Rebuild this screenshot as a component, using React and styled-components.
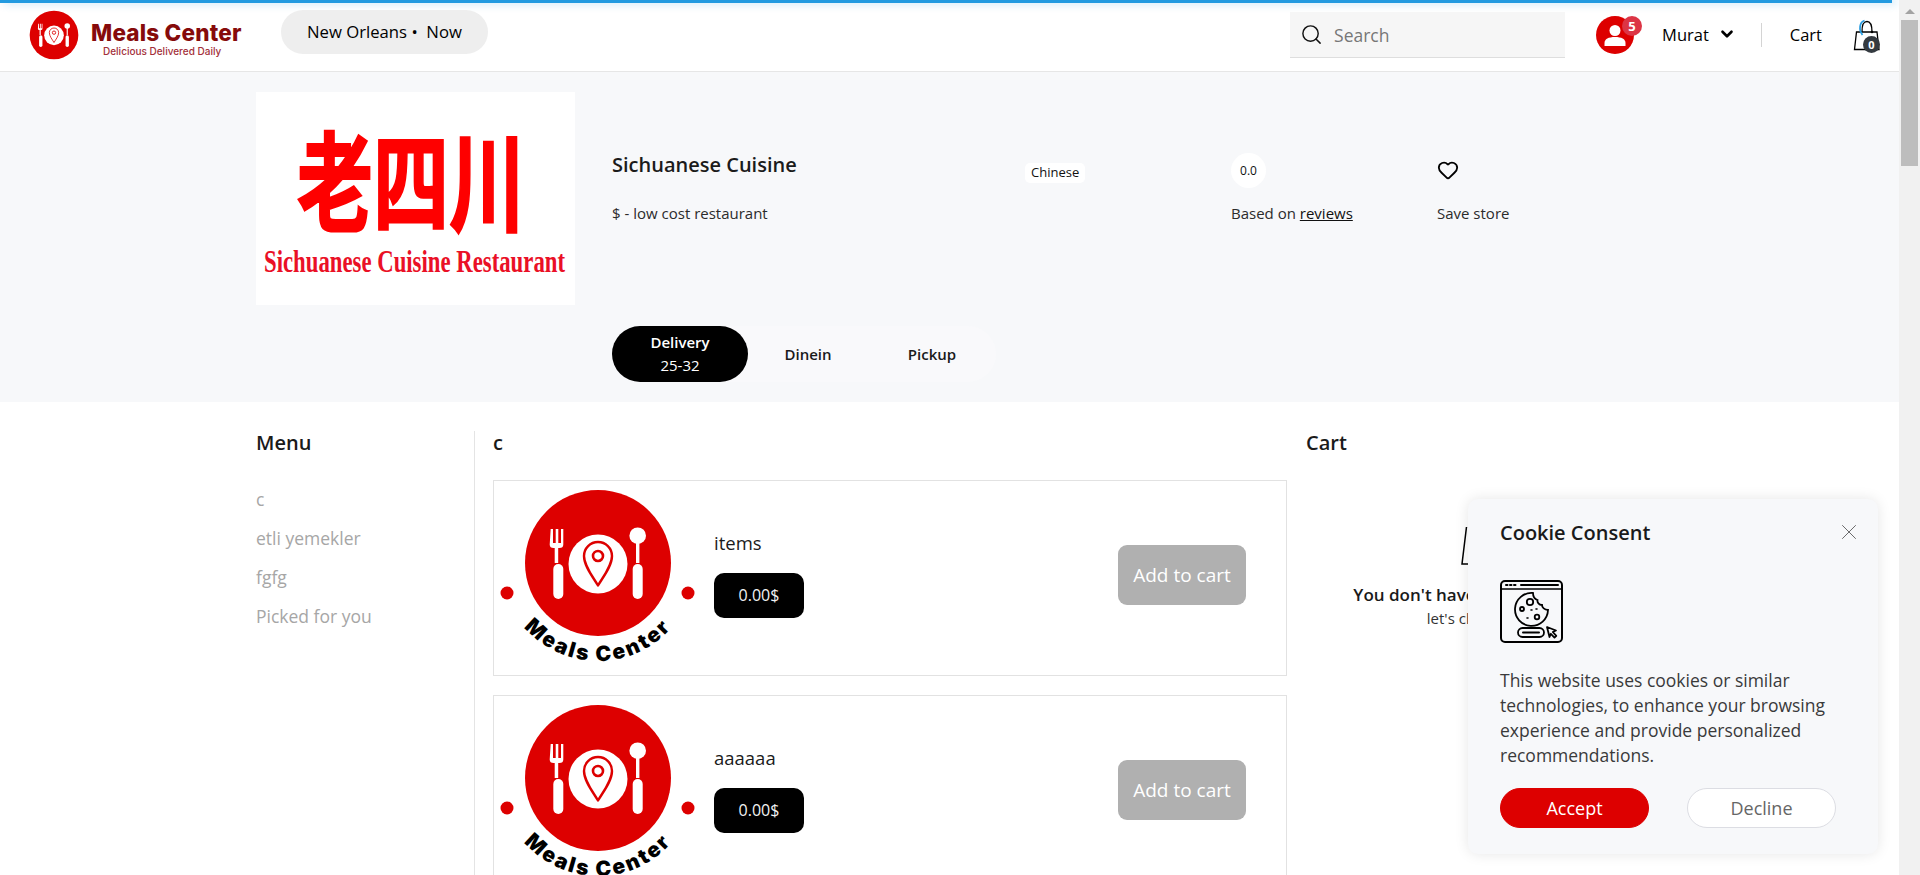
import React from 'react'
import styled, { createGlobalStyle } from 'styled-components'
import { ChevronDown, Heart, Search, X } from 'lucide-react'

const GlobalStyle = createGlobalStyle`
  * { box-sizing: border-box; }
  html, body { margin: 0; padding: 0; height: 100%; overflow: hidden; background: #fff; }
  body { font-family: "Open Sans", "Liberation Sans", sans-serif; color: #1a1a1a; }
`

const menuItems = ['c', 'etli yemekler', 'fgfg', 'Picked for you']
const products = [
  { id: 1, name: 'items', price: '0.00$' },
  { id: 2, name: 'aaaaaa', price: '0.00$' },
]

const DishMark = () => (
  <g>
    <circle r="73" fill="#dd0000" />
    <path
      d="M-47.3 -34h2.3v14h2.7v-14h2.6v14h2.700v-14h2.300v15.500q0 3.500 -4 3.500h-1.100v15h-3.500v-15h-1q-4 0 -4 -3.500z"
      fill="#fff"
    />
    <rect x="-44.700" y="1" width="10" height="35" rx="5" fill="#fff" />
    <circle cy="1" r="29.500" fill="#fff" />
    <path
      d="M0 22.500C-5 14 -14 3 -14 -7A14 14 0 0 1 14 -7C14 3 5 14 0 22.500Z"
      fill="none"
      stroke="#dd0000"
      strokeWidth="2.400"
      strokeLinejoin="round"
    />
    <circle cy="-7" r="5" fill="none" stroke="#dd0000" strokeWidth="2.600" />
    <circle cx="39.700" cy="-27.300" r="8.300" fill="#fff" />
    <rect x="38" y="-22" width="3.400" height="22" fill="#fff" />
    <rect x="34.700" y="1" width="10" height="35" rx="5" fill="#fff" />
  </g>
)

const ProductLogo = ({ id }) => (
  <ProductImage viewBox="-100 -75 200 175">
    <DishMark />
    <circle cx="-91" cy="30" r="6.500" fill="#dd0000" />
    <circle cx="90" cy="30" r="6.500" fill="#dd0000" />
    <path id={`arc-${id}`} d="M-98 0A98 98 0 0 0 98 0" fill="none" />
    <ArcLabel textAnchor="middle">
      <textPath href={`#arc-${id}`} startOffset="50%">
        Meals Center
      </textPath>
    </ArcLabel>
  </ProductImage>
)

const StoreLogo = () => (
  <StoreImage viewBox="0 0 319 213">
    <CjkName x="41" y="95" textLength="228" lengthAdjust="spacingAndGlyphs" transform="scale(1 1.38)">
      老四川
    </CjkName>
    <StoreCaption x="8" y="180" textLength="301" lengthAdjust="spacingAndGlyphs">
      Sichuanese Cuisine Restaurant
    </StoreCaption>
  </StoreImage>
)

const CookieIcon = () => (
  <CookieGlyph width="63" height="63" viewBox="0 0 63 63" fill="none" stroke="#000" strokeWidth="1.800">
    <rect x="1" y="1" width="61" height="61" rx="4" strokeWidth="2" />
    <path d="M1 9h61" strokeWidth="1.500" />
    <path d="M6 5h1.500M10 5h1.500M14 5h1.500M21 5h37" strokeWidth="2" strokeLinecap="round" />
    <path d="M33 13A16.500 16.500 0 1 0 48 30C44.500 30 42 27.500 42 25C39 25 37 22.500 37.500 20C34.500 19 33 16 33 13Z" />
    <circle cx="30" cy="22" r="3.200" />
    <circle cx="22" cy="29" r="2" />
    <circle cx="37" cy="37" r="2.300" />
    <path d="M31 30h1M27 38h1M36 29h1" strokeWidth="1.600" strokeLinecap="round" />
    <rect x="18" y="48" width="26" height="9" rx="4.500" />
    <path d="M23 52.500h16" strokeWidth="2" strokeLinecap="round" />
    <path d="M47 47l9 3.500-3.200 1.500 3.500 3.800-1.800 1.800-3.700-3.800-1.300 3.200z" strokeLinejoin="round" />
  </CookieGlyph>
)

const BagIcon = () => (
  <svg width="30" height="36" viewBox="0 0 30 36" fill="none">
    <path d="M4.500 15H25L27 32.500H2.500Z" stroke="#000" strokeWidth="1.300" />
    <path d="M10 15C10 8 11 4.500 15 4.500S20 8 20 15" stroke="#000" strokeWidth="1.300" />
    <circle cx="20" cy="15" r="1.300" fill="#000" />
    <path d="M12.500 3.500C7.500 5 6.500 13 10.500 18" stroke="#2a9de0" strokeWidth="1.800" />
  </svg>
)

const App = () => (
  <>
    <GlobalStyle />
    <Viewport>
      <Page>
        <TopBar />
        <Header>
          <Brand>
            <svg width="50" height="50" viewBox="-75 -75 150 150">
              <DishMark />
            </svg>
            <BrandText>
              <BrandName>Meals Center</BrandName>
              <BrandTagline>Delicious Delivered Daily</BrandTagline>
            </BrandText>
          </Brand>
          <LocationPill>New Orleans •&nbsp; Now</LocationPill>
          <HeaderRight>
            <SearchBox>
              <Search size={23} strokeWidth={1.500} color="#111" />
              <span>Search</span>
            </SearchBox>
            <Avatar>
              <svg width="24" height="24" viewBox="0 0 24 24" fill="#fff">
                <circle cx="12" cy="7.500" r="5.500" />
                <path d="M1.500 23v-3c0-4 4-6 10.500-6s10.500 2 10.500 6v3z" />
              </svg>
              <CountBadge>5</CountBadge>
            </Avatar>
            <UserName>
              Murat
              <ChevronDown size={18} strokeWidth={3.500} color="#000" />
            </UserName>
            <Divider />
            <CartLink>Cart</CartLink>
            <BagButton>
              <BagIcon />
              <BagCount>0</BagCount>
            </BagButton>
          </HeaderRight>
        </Header>

        <Hero>
          <StoreLogo />
          <HeroBody>
            <InfoGrid>
              <StoreName>Sichuanese Cuisine</StoreName>
              <div>
                <CuisineChip>Chinese</CuisineChip>
              </div>
              <RatingChip>0.0</RatingChip>
              <SaveIcon>
                <Heart size={22} strokeWidth={2} color="#000" />
              </SaveIcon>
              <InfoText>$ - low cost restaurant</InfoText>
              <span />
              <InfoText>
                Based on <u>reviews</u>
              </InfoText>
              <InfoText>Save store</InfoText>
            </InfoGrid>
            <Tabs>
              <Tab $active $width={136}>
                <span>Delivery</span>
                <small>25-32</small>
              </Tab>
              <Tab $width={120}>Dinein</Tab>
              <Tab $width={128}>Pickup</Tab>
            </Tabs>
          </HeroBody>
        </Hero>

        <Content>
          <MenuColumn>
            <SectionTitle>Menu</SectionTitle>
            {menuItems.map((item) => (
              <MenuItem key={item}>{item}</MenuItem>
            ))}
          </MenuColumn>
          <ProductColumn>
            <SectionTitle>c</SectionTitle>
            {products.map((product) => (
              <ProductCard key={product.id}>
                <ProductLogo id={product.id} />
                <ProductInfo>
                  <ProductName>{product.name}</ProductName>
                  <PriceTag>{product.price}</PriceTag>
                </ProductInfo>
                <AddButton>Add to cart</AddButton>
              </ProductCard>
            ))}
          </ProductColumn>
          <CartColumn>
            <SectionTitle>Cart</SectionTitle>
            <EmptyCart>
              <svg width="48" height="38" viewBox="0 0 48 38" fill="none" stroke="#000" strokeWidth="1.500">
                <path d="M5.500 0L1 37H47" />
              </svg>
              <EmptyTitle>You don't have any items in cart</EmptyTitle>
              <EmptyHint>let's check menu</EmptyHint>
            </EmptyCart>
          </CartColumn>
        </Content>

        <CookieModal>
          <CookieHead>
            <CookieTitle>Cookie Consent</CookieTitle>
            <X size={26} strokeWidth={0.800} color="#555" />
          </CookieHead>
          <CookieIcon />
          <CookieCopy>
            This website uses cookies or similar technologies, to enhance your browsing experience and
            provide personalized recommendations.
          </CookieCopy>
          <CookieActions>
            <ConsentButton $primary>Accept</ConsentButton>
            <ConsentButton>Decline</ConsentButton>
          </CookieActions>
        </CookieModal>
      </Page>
      <ScrollTrack>
        <ScrollArrow />
        <ScrollThumb />
      </ScrollTrack>
    </Viewport>
  </>
)

export default App

const Viewport = styled.div`
  display: flex;
  width: 100%;
  height: 100vh;
  overflow: hidden;
`
const Page = styled.div`
  position: relative;
  flex: 1;
  min-width: 0;
  overflow: hidden;
`
const ScrollTrack = styled.div`
  width: 21px;
  flex: none;
  background: #f1f1f1;
  padding: 9px 2px 0;
`
const ScrollArrow = styled.div`
  width: 0;
  height: 0;
  margin: 0 auto 6px;
  border-left: 5px solid transparent;
  border-right: 5px solid transparent;
  border-bottom: 5px solid #a3a3a3;
`
const ScrollThumb = styled.div`
  height: 146px;
  background: #bdbdbd;
`
const TopBar = styled.div`
  width: 1892px;
  height: 3px;
  background: #229ae0;
  box-shadow: 4px 0 8px rgba(34, 154, 224, 0.45);
`
const Header = styled.header`
  display: flex;
  align-items: center;
  height: 69px;
  padding: 0 17px 4px 29px;
  border-bottom: 1px solid #e6e6e6;
`
const Brand = styled.div`
  display: flex;
  align-items: center;
  gap: 12px;
  width: 252px;
`
const BrandText = styled.div`
  margin-top: 7px;
  font-family: Inter, "Liberation Sans", sans-serif;
`
const BrandName = styled.div`
  font-size: 22.500px;
  line-height: 25px;
  font-weight: 800;
  letter-spacing: 0.200px;
  color: #860b0b;
  white-space: nowrap;
`
const BrandTagline = styled.div`
  margin-left: 12px;
  font-size: 10px;
  line-height: 12px;
  font-weight: 500;
  color: #a3303a;
  white-space: nowrap;
`
const LocationPill = styled.div`
  display: flex;
  align-items: center;
  height: 44px;
  margin-bottom: 6px;
  padding: 0 26px 2px;
  border-radius: 22px;
  background: #eeeeee;
  font-size: 16.700px;
  font-weight: 500;
  color: #000;
`
const HeaderRight = styled.div`
  display: flex;
  align-items: center;
  margin-left: auto;
`
const SearchBox = styled.div`
  display: flex;
  align-items: center;
  gap: 11px;
  width: 275px;
  height: 46px;
  padding-left: 10px;
  background: #f6f6f6;
  border-bottom: 1px solid #dedede;
  font-size: 17.500px;
  color: #777;
`
const Avatar = styled.div`
  position: relative;
  display: flex;
  align-items: center;
  justify-content: center;
  width: 38px;
  height: 38px;
  margin-left: 31px;
  border-radius: 50%;
  background: #dd0000;
`
const CountBadge = styled.span`
  position: absolute;
  top: 0;
  left: 26px;
  width: 20px;
  height: 20px;
  border-radius: 50%;
  background: #dc3545;
  color: #fff;
  font-size: 13px;
  font-weight: 700;
  line-height: 20px;
  text-align: center;
`
const UserName = styled.div`
  display: flex;
  align-items: center;
  gap: 9px;
  margin: 0 0 2px 28px;
  font-size: 16.500px;
  font-weight: 500;
  color: #000;
`
const Divider = styled.div`
  width: 1px;
  height: 24px;
  margin-left: 25px;
  background: #d4d4d4;
`
const CartLink = styled.div`
  margin: 0 0 2px 28px;
  font-size: 16.500px;
  font-weight: 500;
  color: #000;
`
const BagButton = styled.div`
  position: relative;
  width: 30px;
  height: 36px;
  margin-left: 30px;
`
const BagCount = styled.span`
  position: absolute;
  top: 19px;
  right: 2px;
  width: 17px;
  height: 17px;
  border-radius: 50%;
  background: #343a40;
  color: #fff;
  font-size: 11px;
  font-weight: 700;
  line-height: 17px;
  text-align: center;
`
const Hero = styled.section`
  display: flex;
  gap: 37px;
  height: 330px;
  padding: 20px 0 0 256px;
  background: #f7f8fa;
`
const StoreImage = styled.svg`
  width: 319px;
  height: 213px;
  flex: none;
  background: #fff;
`
const CjkName = styled.text`
  font-family: "Noto Sans CJK SC", sans-serif;
  font-size: 78px;
  font-weight: 700;
  fill: #fe0000;
  stroke: #fe0000;
  stroke-width: 1.500px;
`
const StoreCaption = styled.text`
  font-family: "Liberation Serif", serif;
  font-size: 31px;
  font-weight: 700;
  fill: #ea1026;
`
const HeroBody = styled.div`
  display: flex;
  flex-direction: column;
  padding-top: 61px;
`
const InfoGrid = styled.div`
  display: grid;
  grid-template-columns: 413px 206px 206px 206px;
  grid-template-rows: 35px 20px;
  row-gap: 15px;
`
const StoreName = styled.div`
  font-size: 20px;
  line-height: 24px;
  font-weight: 600;
  color: #1b1b1b;
`
const CuisineChip = styled.span`
  display: inline-block;
  margin-top: 10px;
  padding: 0 6px;
  height: 20px;
  border-radius: 5px;
  background: #fff;
  font-size: 13px;
  font-weight: 500;
  line-height: 19px;
  color: #111;
`
const RatingChip = styled.div`
  width: 35px;
  height: 35px;
  border-radius: 50%;
  background: #fff;
  font-size: 12px;
  font-weight: 500;
  line-height: 35px;
  text-align: center;
  color: #111;
`
const SaveIcon = styled.div`
  padding-top: 6px;
  line-height: 0;
`
const InfoText = styled.div`
  font-size: 15px;
  line-height: 20px;
  color: #2b2b2b;
  u { color: #111; }
`
const Tabs = styled.div`
  display: flex;
  width: 384px;
  height: 56px;
  margin-top: 103px;
  border-radius: 28px;
  background: #f9f9fb;
`
const Tab = styled.div`
  display: flex;
  flex-direction: column;
  align-items: center;
  justify-content: center;
  width: ${(props) => props.$width}px;
  border-radius: 28px;
  background: ${(props) => (props.$active ? '#000' : 'transparent')};
  color: ${(props) => (props.$active ? '#fff' : '#1a1a1a')};
  font-size: 15px;
  font-weight: 600;
  line-height: 23px;
  small { font-size: 15px; font-weight: 500; }
`
const Content = styled.main`
  display: flex;
  padding: 29px 0 0 256px;
`
const SectionTitle = styled.h2`
  margin: 0 0 25px;
  font-size: 20px;
  line-height: 24px;
  font-weight: 600;
  color: #1a1a1a;
`
const MenuColumn = styled.aside`
  width: 218px;
  flex: none;
`
const MenuItem = styled.div`
  font-size: 17.500px;
  line-height: 39px;
  color: #a6a6a6;
`
const ProductColumn = styled.div`
  width: 813px;
  flex: none;
  padding-left: 18px;
  border-left: 1px solid #e4e4e4;
  min-height: 600px;
`
const ProductCard = styled.article`
  display: flex;
  align-items: flex-start;
  width: 794px;
  height: 196px;
  margin-bottom: 19px;
  border: 1px solid #e2e2e2;
`
const ProductImage = styled.svg`
  width: 200px;
  height: 175px;
  flex: none;
  margin: 7px 16px 0 4px;
`
const ArcLabel = styled.text`
  font-family: Inter, "Liberation Sans", sans-serif;
  font-size: 21px;
  font-weight: 900;
  letter-spacing: 2.300px;
  fill: #000;
`
const ProductInfo = styled.div`
  padding-top: 50px;
`
const ProductName = styled.div`
  font-size: 18.500px;
  line-height: 24px;
  color: #1a1a1a;
`
const PriceTag = styled.div`
  width: 90px;
  height: 45px;
  margin-top: 18px;
  border-radius: 10px;
  background: #000;
  color: #f2f2f2;
  font-size: 16px;
  font-weight: 500;
  line-height: 45px;
  text-align: center;
`
const AddButton = styled.button`
  width: 128px;
  height: 60px;
  margin: 64px 40px 0 auto;
  border: 0;
  border-radius: 9px;
  background: #b0b0b0;
  color: #fff;
  font-family: inherit;
  font-size: 19px;
`
const CartColumn = styled.div`
  width: 358px;
  flex: none;
  margin-left: 19px;
`
const EmptyCart = styled.div`
  display: flex;
  flex-direction: column;
  align-items: center;
  padding-top: 47px;
`
const EmptyTitle = styled.div`
  margin-top: 18px;
  font-size: 17px;
  line-height: 24px;
  font-weight: 600;
  white-space: nowrap;
`
const EmptyHint = styled.div`
  font-size: 15px;
  line-height: 22px;
  color: #333;
`
const CookieModal = styled.div`
  position: absolute;
  top: 499px;
  left: 1468px;
  width: 410px;
  height: 355px;
  padding: 20px 32px;
  border-radius: 10px;
  background: #f7f8fa;
  box-shadow: 0 0 14px rgba(0, 0, 0, 0.1);
`
const CookieHead = styled.div`
  display: flex;
  align-items: center;
  justify-content: space-between;
  height: 26px;
  margin: 0 -16px 35px 0;
`
const CookieTitle = styled.div`
  font-size: 20px;
  font-weight: 600;
  color: #1a1a1a;
`
const CookieGlyph = styled.svg`
  display: block;
`
const CookieCopy = styled.p`
  margin: 25px 0 0;
  font-size: 17.500px;
  line-height: 25px;
  color: #3a3a3a;
`
const CookieActions = styled.div`
  display: flex;
  gap: 38px;
  margin-top: 20px;
`
const ConsentButton = styled.button`
  width: 149px;
  height: 40px;
  border: 1px solid ${(props) => (props.$primary ? '#dd0000' : '#dcdde3')};
  border-radius: 20px;
  background: ${(props) => (props.$primary ? '#dd0000' : '#fff')};
  color: ${(props) => (props.$primary ? '#fff' : '#666')};
  font-family: inherit;
  font-size: 18px;
`
